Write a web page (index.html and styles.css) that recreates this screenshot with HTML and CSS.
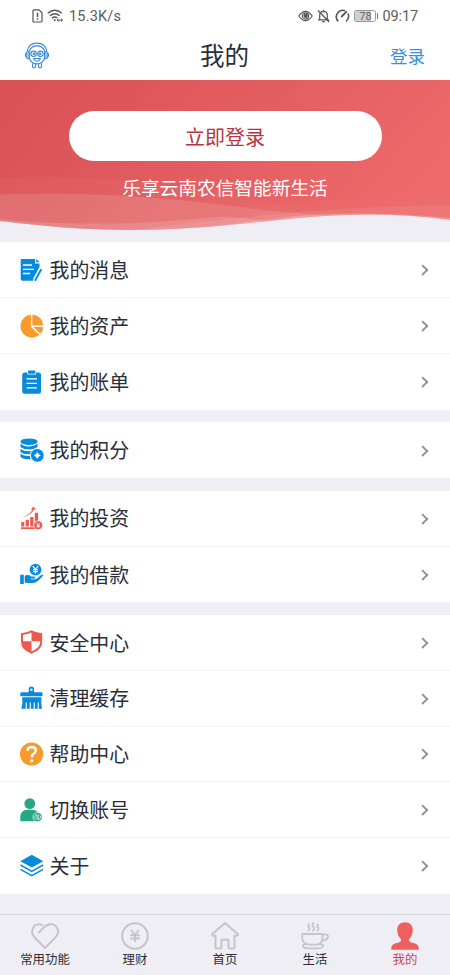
FILE: index.html
```
<!DOCTYPE html>
<html lang="zh-CN">
<head>
<meta charset="utf-8">
<meta name="viewport" content="width=device-width, initial-scale=1">
<title>我的</title>
<link rel="stylesheet" href="styles.css">
</head>
<body>
<div class="app">
  <div class="status">
    <div class="status-left">
      <svg width="11" height="14" viewBox="0 0 11 14" fill="none" stroke="#555" stroke-width="1.2"><path d="M1 1.8Q1 .8 2 .8H7L10 3.8V12Q10 13 9 13H2Q1 13 1 12Z"/><path d="M5.5 3.7V8M5.5 9.3V10.8" stroke-width="1.5"/></svg>
      <svg width="17" height="14" viewBox="0 0 17 14" fill="none" stroke="#555" stroke-width="1.4"><path d="M.8 4.2Q7.8-1.9 14.8 4.2M3 6.7Q7.8 2.6 12.6 6.7M5.1 9.1Q7.8 6.8 10.3 9.1"/><path d="M6.2 10.5L7.8 12.4 9.3 10.5Z" fill="#555" stroke="none"/><path d="M10 11.2H15.5M11.5 9.8L10 11.2 11.5 12.6M14 9.8L15.5 11.2 14 12.6" stroke-width="1"/></svg>
      <span class="speed">15.3K/s</span>
    </div>
    <div class="status-right">
      <svg width="15" height="12" viewBox="0 0 15 12" fill="none" stroke="#555" stroke-width="1.2"><path d="M.8 6Q7.5-3.4 14.2 6 7.5 15.4.8 6Z"/><circle cx="7.5" cy="6" r="3.1"/><circle cx="7.7" cy="5.8" r="1.6" fill="#555"/></svg>
      <svg width="13" height="14" viewBox="0 0 13 14" fill="none" stroke="#555" stroke-width="1.2"><path d="M2.7 10.7V6Q2.7 2.5 6.5 2.3 10.3 2.5 10.3 6V10.7M1 10.8H12M5.2 12.7H7.8M6.5.8V2.3M1 1.5L12.2 13"/></svg>
      <svg width="16" height="14" viewBox="0 0 16 14" fill="none" stroke="#555" stroke-width="1.6"><path d="M4.3 12.4A6.5 6.5 0 0 1 11.1 1.7M14 4.5A6.5 6.5 0 0 1 11.9 12.3"/><path d="M7.2 8L12.8 2.3" stroke-width="1.8"/></svg>
      <div class="battery"><span>78</span></div>
      <span class="clock">09:17</span>
    </div>
  </div>

  <header class="header">
    <svg class="robot" width="26" height="27" viewBox="0 0 26 27" fill="none" stroke="#398bd6" stroke-width="1.15"><path d="M3.2 9.4C4 4 8 1.1 13 1.1S22 4 22.8 9.4M5.5 9C6.5 5.5 9 3.8 13 3.8S19.5 5.5 20.5 9"/><path d="M5.3 9V16.2Q7.5 21.8 13 21.8T20.7 16.2V9"/><rect x="2.9" y="9.5" width="2.3" height="7.2" rx="1"/><rect x="20.8" y="9.5" width="2.3" height="7.2" rx="1"/><path d="M2.7 10.5Q.2 13 2.7 15.7M23.3 10.5Q25.8 13 23.3 15.7"/><circle cx="9.6" cy="11.8" r="2.7"/><circle cx="16.4" cy="11.8" r="2.7"/><circle cx="9.9" cy="11.8" r=".7" fill="#398bd6"/><circle cx="16.1" cy="11.8" r=".7" fill="#398bd6"/><path d="M9.8 16.5H16.2Q15.6 19.2 13 19.2T9.8 16.5Z"/><path d="M8.5 21.3V24Q8.5 25.8 10 25.8T11.5 24V22M17.5 21.3V24Q17.5 25.8 16 25.8T14.5 24V22"/></svg>
    <h1>我的</h1>
    <a class="login-link">登录</a>
  </header>

  <section class="hero">
    <svg class="wave" width="450" height="163" viewBox="0 0 450 163" preserveAspectRatio="none">
      <defs>
        <linearGradient id="red" gradientUnits="userSpaceOnUse" x1="70" y1="-60" x2="340" y2="190"><stop offset="0" stop-color="#d85155"/><stop offset="1" stop-color="#ed696a"/></linearGradient>
        <clipPath id="edge"><path d="M0 0H450V139.7C415 135 377 133.5 342 135C275 138 215 150 130 150C85 150 42 146 0 141Z"/></clipPath>
      </defs>
      <g clip-path="url(#edge)">
        <path d="M0 0H450V163H0Z" fill="url(#red)"/>
        <path d="M0 98C90 94 170 104 226 115S330 133 360 136V163H0Z" fill="#fff" opacity=".03"/>
        <path d="M0 114.5C100 111 180 119 240 127C280 132 310 134 345 137V163H0Z" fill="#fff" opacity=".12"/>
        <path d="M240 127C300 121 380 120 450 115V163H300Z" fill="#fff" opacity=".02"/>
        <path d="M100 152C190 146 290 126 450 125.5V163H100Z" fill="#fff" opacity=".08"/>
        <path d="M0 139C35 143 70 144 115 143.5C155 143 190 139 225 136.5L260 140V163H0Z" fill="#fff" opacity=".14"/>
        <path d="M225 145C275 138 320 132 370 133.5C400 134 430 136 450 138V145H225Z" fill="#fff" opacity=".2"/>
      </g>
    </svg>
    <button class="login-btn"><span>立即登录</span></button>
    <p class="slogan">乐享云南农信智能新生活</p>
  </section>

  <main class="groups">
    <section class="group">
      <div class="row">
        <svg class="icon" viewBox="0 0 24 24"><path d="M1.5 1H15V5.5H19.5V9L13.5 20 13 22.8H2.5Q.7 22.8.7 21V2Q.7 1 1.5 1Z" fill="#078bda"/><path d="M16.2 1L19.6 4.3H16.2Z" fill="#078bda"/><path d="M3 7H12M3 11.3H14M3 15.5H10" stroke="#fff" stroke-width="1.3"/><path d="M21.3 11.3L15.6 21.6 15.2 23" stroke="#078bda" stroke-width="1.9" fill="none"/></svg>
        <span>我的消息</span><i class="chev"></i></div>
      <div class="row">
        <svg class="icon" viewBox="0 0 24 24" fill="#f99a2d"><path d="M11.2.8V13.2L19.3 20.8A11.4 11.4 0 1 1 11.2.8Z"/><path d="M12.4.6A11.5 11.5 0 0 1 23.4 11.6H12.4Z"/><path d="M13.4 13H23.4Q23 17 20.3 19.7Z"/></svg>
        <span>我的资产</span><i class="chev"></i></div>
      <div class="row">
        <svg class="icon" viewBox="0 0 24 24"><rect x="2.2" y="2.5" width="18.8" height="21.2" rx="2.5" fill="#078bda"/><rect x="7.2" y="-.1" width="9" height="4.6" rx="1.5" fill="#fff"/><rect x="8" y=".5" width="7.4" height="3.2" rx="1" fill="#078bda"/><path d="M6.5 8.9H17M6.5 13.4H17M6.5 17.9H17" stroke="#fff" stroke-width="1.3"/></svg>
        <span>我的账单</span><i class="chev"></i></div>
    </section>

    <section class="group">
      <div class="row">
        <svg class="icon" viewBox="0 0 24 24"><g fill="#078bda"><ellipse cx="9" cy="3.7" rx="8.5" ry="3.3"/><path d="M.5 5.8Q4 8.7 9 8.5T17.5 5.8V9Q14 11.6 9 11.6T.5 9ZM.5 10.9Q4 13.5 9 13.3 13 13.3 16 12.2L12.5 16Q4 17 .5 14ZM.5 15.7Q4 18.4 10.5 17.8V21.2Q3.5 21.5.5 18.9Z"/><circle cx="17.3" cy="17.4" r="6.9" stroke="#fff" stroke-width="1"/></g><path d="M17.3 13.9L18.6 16.1 20.8 17.4 18.6 18.7 17.3 20.9 16 18.7 13.8 17.4 16 16.1Z" fill="#fff"/></svg>
        <span>我的积分</span><i class="chev"></i></div>
    </section>

    <section class="group">
      <div class="row">
        <svg class="icon" viewBox="0 0 24 24"><g fill="#ec594d"><path d="M1.2 16H4.3V20.4H1.2ZM5.7 13.7H8.9V20.4H5.7ZM10.2 11H13.5V20.4H10.2ZM14.8 6.8H18.1V16L16 20.4H14.8ZM1 21.3H15V23H1Z"/><path d="M13.4.4L16 3.5H10.9ZM12.7 3H14.2Q11.6 9 1.3 12.3 10.6 8.3 12.7 3Z"/><circle cx="18.2" cy="19.2" r="4.5" stroke="#fff" stroke-width=".7"/></g><path d="M16.5 16.8L18.2 19 19.9 16.8M18.2 19V22M16.5 19.3H19.9M16.5 20.6H19.9" fill="none" stroke="#fff" stroke-width=".75"/></svg>
        <span>我的投资</span><i class="chev"></i></div>
      <div class="row">
        <svg class="icon" viewBox="0 0 24 24"><path d="M.2 12.7H3.8V22.1H.2ZM4.7 13.7Q8.3 12 11 14.4H14Q16.1 14.6 15.3 16.5H10.8V17.2H15.5Q17.5 16.8 20.5 13.6 22.3 12.1 23.5 13.3 18.2 19.4 15.5 20.4 10 21.7 4.7 20.6Z" fill="#078bda"/><circle cx="15.5" cy="7.6" r="5.9" fill="#078bda"/><path d="M12.9 4.2L15.5 7.4 18.1 4.2M15.5 7.4V11.6M13 7.7H18M13 9.6H18" fill="none" stroke="#fff" stroke-width="1.2"/></svg>
        <span>我的借款</span><i class="chev"></i></div>
    </section>

    <section class="group">
      <div class="row">
        <svg class="icon" viewBox="0 0 24 24"><path d="M11.5.3Q16.5 3.1 22.2 3.3V12Q22.2 19.5 11.5 23.7 1 19.5 1 12V3.3Q6.7 3.1 11.5.3Z" fill="#ec594d"/><path d="M11.5 2.6V11.3H3V4.7Q8 4.4 11.5 2.6ZM11.5 11.3H20.2V12Q20.2 17.7 11.5 21.5Z" fill="#fff"/></svg>
        <span>安全中心</span><i class="chev"></i></div>
      <div class="row">
        <svg class="icon" viewBox="0 0 24 24"><path d="M.3 7.4Q.3 6.2 1.5 6.2H8.7V3.3A2.7 2.7 0 0 1 14.1 3.3V6.2H21.3Q22.5 6.2 22.5 7.4V10.2H.3Z" fill="#078bda"/><circle cx="11.4" cy="3.8" r="1.2" fill="#fff"/><path d="M2.2 11.2H21.5Q20.7 16.5 22 22.8H18.8V16.5H17.7V22.8H14.8V16.5H13.7V22.8H10.8V16.5H9.7V22.8H6.8V16.5H5.7V22.8H1.2Q3 17.5 2.2 11.2Z" fill="#078bda"/></svg>
        <span>清理缓存</span><i class="chev"></i></div>
      <div class="row">
        <svg class="icon" viewBox="0 0 24 24"><circle cx="11.6" cy="12" r="11.6" fill="#f99a2d"/><path d="M7.5 8.8Q7.8 5.1 11.7 5.1 15.8 5.2 15.8 8.6 15.8 10.5 13.4 12 11.7 13.1 11.7 15.4" fill="none" stroke="#fff" stroke-width="2.5"/><circle cx="11.7" cy="18.8" r="1.6" fill="#fff"/></svg>
        <span>帮助中心</span><i class="chev"></i></div>
      <div class="row">
        <svg class="icon" viewBox="0 0 24 24"><circle cx="9.8" cy="5.6" r="5.4" fill="#26a787"/><path d="M.3 23.2V18.5Q.8 12.2 7 11.7H12.5Q17.8 12.1 19 16.5L17 23.2Z" fill="#26a787"/><circle cx="17.6" cy="19.1" r="4.6" fill="#26a787" stroke="#fff" stroke-width=".7"/><path d="M17 21.8V16.6L14.8 18.4V20.2L15.7 21M18.3 16.6V21.8L20.5 20V18L19.6 17.2" fill="none" stroke="#fff" stroke-width=".7"/></svg>
        <span>切换账号</span><i class="chev"></i></div>
      <div class="row">
        <svg class="icon" viewBox="0 0 24 24"><path d="M11.8.8L23.3 7.2 11.8 13.5.3 7.2Z" fill="#078bda"/><path d="M.5 11L11.8 17.3 23.1 11M.5 15.4L11.8 21.7 23.1 15.4" fill="none" stroke="#078bda" stroke-width="1.5"/></svg>
        <span>关于</span><i class="chev"></i></div>
    </section>
  </main>

  <nav class="tabs">
    <div class="tab">
      <svg width="30" height="30" viewBox="0 0 30 30" fill="none" stroke="#c4c4cb" stroke-width="2" stroke-linecap="round" stroke-linejoin="round"><path d="M9 11.5L13.8 6.5Q20 .7 25.5 4.8 30.5 10 26 15.7L15 27 4 15.7Q-.2 10 4.5 4.8 8.2 2 12 4"/></svg>
      <span>常用功能</span></div>
    <div class="tab">
      <svg width="30" height="30" viewBox="0 0 30 30" fill="none" stroke="#c4c4cb" stroke-width="2"><circle cx="15" cy="15" r="12.8"/><path d="M11 9L15 14 19 9M15 14V21M10.3 14.3H19.7M10.3 17.4H19.7"/></svg>
      <span>理财</span></div>
    <div class="tab">
      <svg width="30" height="30" viewBox="0 0 30 30" fill="none" stroke="#c4c4cb" stroke-width="2" stroke-linejoin="round"><path d="M15 2L28 13.3Q28.5 15.2 24.5 14.8V26Q24.5 27.5 23 27.5H20Q18.5 27.5 18.5 26V18.8H11.5V26Q11.5 27.5 10 27.5H7Q5.5 27.5 5.5 26V14.8Q1.5 15.2 2 13.3Z"/></svg>
      <span>首页</span></div>
    <div class="tab">
      <svg width="30" height="30" viewBox="0 0 30 30" fill="none" stroke="#c4c4cb" stroke-width="1.8" stroke-linecap="round" stroke-linejoin="round"><path d="M2.2 13H22.5V17Q22 23.5 16.5 23.7H9Q2.7 23 2.2 17ZM22.5 14Q28.5 12.3 28 16 27.4 19.3 21.5 19.8M6.8 22.8Q2.5 23.5 3 25.5 4 27.3 9 27.3H16Q23 27.3 23.3 25 23 23.3 19 22.7"/><path d="M9 3.5Q7.2 4.8 8.8 6.2T8.5 9.7M13.5 2Q11.4 4 13.2 5.7T13 9.7M18 3.5Q16.2 4.8 17.8 6.2T17.5 9.7"/></svg>
      <span>生活</span></div>
    <div class="tab active">
      <svg width="30" height="30" viewBox="0 0 30 30" fill="#ee6060"><path d="M15 1.2C20 1.2 22.8 4.4 22.8 9 22.8 13 21 16.3 19 18.2 18.5 20.3 20 21.2 23.5 22 27.6 23 28.6 24.6 28.8 28.7H1.2C1.4 24.6 2.4 23 6.5 22 10 21.2 11.5 20.3 11 18.2 9 16.3 7.2 13 7.2 9 7.2 4.4 10 1.2 15 1.2Z"/></svg>
      <span>我的</span></div>
  </nav>
</div>
</body>
</html>
```
FILE: styles.css
```
* { box-sizing: border-box; }

body {
  margin: 0;
  background: #efeef4;
  font-family: Roboto, "Noto Sans CJK SC", sans-serif;
  color: #2b2e38;
}

.app {
  width: 450px;
  height: 975px;
  display: flex;
  flex-direction: column;
  overflow: hidden;
}

.status {
  height: 32px;
  flex: none;
  padding: 0 32px;
  background: #fff;
  display: flex;
  justify-content: space-between;
  align-items: center;
  color: #5c5c5c;
  font-size: 14.5px;
  line-height: 20px;
}

.status svg { flex: none; }

.status-left,
.status-right {
  display: flex;
  align-items: center;
}

.status-left { gap: 4px; }
.status-right { gap: 4px; }
.speed { margin-left: 1px; padding-top: 1px; letter-spacing: .2px; }
.clock { padding-top: 1px; letter-spacing: -.1px; }

.battery {
  position: relative;
  width: 22px;
  height: 12px;
  margin-right: 2px;
  border: 1px solid #999;
  border-radius: 2.5px;
  background: linear-gradient(90deg, #d0d0d0 78%, #fff 78%);
  font-size: 10.5px;
  line-height: 11px;
  text-align: center;
}

.battery::after {
  content: "";
  position: absolute;
  right: -3px;
  top: 2px;
  width: 1.5px;
  height: 6px;
  background: #777;
}

.header {
  height: 48px;
  flex: none;
  padding: 0 25px 0 24px;
  background: #fff;
  display: grid;
  grid-template-columns: 1fr auto 1fr;
  align-items: center;
}

.header h1 {
  margin: 0;
  padding-top: 2px;
  font-size: 24.5px;
  font-weight: 400;
  line-height: 36px;
}

.robot { margin-top: -1px; }

.login-link {
  justify-self: end;
  padding-bottom: 2px;
  color: #398ed8;
  font-size: 17.5px;
}

.hero {
  position: relative;
  height: 162.4px;
  flex: none;
  display: flex;
  flex-direction: column;
  align-items: center;
  padding-top: 31px;
}

.wave {
  position: absolute;
  left: 0;
  top: 0;
}

.login-btn {
  position: relative;
  width: 313px;
  height: 50px;
  padding: 4px 0 0;
  border: 0;
  border-radius: 25px;
  background: #fff;
  color: #b73540;
  font-family: inherit;
  font-size: 20px;
  line-height: 46px;
}

.slogan {
  position: relative;
  margin: 13.5px 0 0;
  color: #fff;
  font-size: 18.7px;
  line-height: 28px;
}

.groups {
  flex: none;
  display: flex;
  flex-direction: column;
  gap: 12.6px;
}

.group { background: #fff; }

.row {
  height: 55.8px;
  padding: 0 22px 0 20px;
  display: flex;
  align-items: center;
  font-size: 19.9px;
}

.row:not(:last-child) { border-bottom: 1px solid #f2f2f4; }

.row span {
  flex: 1;
  padding-bottom: .6px;
}

.icon {
  width: 24px;
  height: 24px;
  flex: none;
  margin: 0 5.5px 0 0;
}

.chev {
  width: 7.6px;
  height: 7.6px;
  margin: .4px 1.2px 0 0;
  border: solid #929497;
  border-width: 2px 2px 0 0;
  transform: rotate(45deg);
}

.tabs {
  height: 61px;
  flex: none;
  margin-top: auto;
  border-top: 1px solid #d6d6db;
  display: flex;
}

.tab {
  flex: 1;
  display: flex;
  flex-direction: column;
  align-items: center;
  padding-top: 6px;
  font-size: 12.4px;
  line-height: 18px;
}

.tab svg { flex: none; }
.tab.active { color: #c9464c; }
```
